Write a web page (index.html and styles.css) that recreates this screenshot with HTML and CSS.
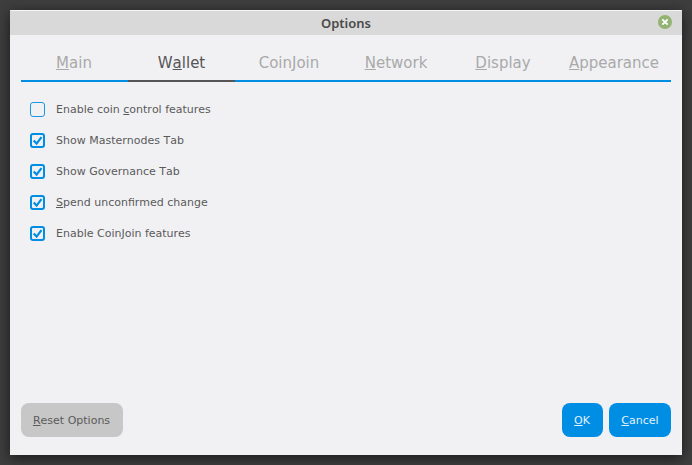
FILE: index.html
```html
<!DOCTYPE html>
<html lang="en">
<head>
<meta charset="utf-8">
<title>Options</title>
<link rel="stylesheet" href="styles.css">
</head>
<body>
<main class="dialog">
  <header class="titlebar">
    <h1 class="title">Options</h1>
    <button class="close" aria-label="Close">
      <svg width="14" height="14" viewBox="0 0 14 14"><circle cx="7" cy="7" r="7" fill="#92b372"/><path d="M4.3 4.3l5.4 5.4M9.7 4.3l-5.4 5.4" stroke="#fff" stroke-width="1.9"/></svg>
    </button>
  </header>
  <nav class="tabs">
    <a class="tab"><span class="label"><u>M</u>ain</span></a>
    <a class="tab active"><span class="label">W<u>a</u>llet</span></a>
    <a class="tab"><span class="label">CoinJoin</span></a>
    <a class="tab"><span class="label"><u>N</u>etwork</span></a>
    <a class="tab"><span class="label"><u>D</u>isplay</span></a>
    <a class="tab"><span class="label"><u>A</u>ppearance</span></a>
  </nav>
  <section class="options">
    <label class="option"><span class="box"></span><span>Enable coin <u>c</u>ontrol features</span></label>
    <label class="option"><span class="box checked"><svg width="15" height="15" viewBox="0 0 15 15"><path d="M3.7 7.6l2.9 3 4.9-6.4" /></svg></span><span>Show Masternodes Tab</span></label>
    <label class="option"><span class="box checked"><svg width="15" height="15" viewBox="0 0 15 15"><path d="M3.7 7.6l2.9 3 4.9-6.4" /></svg></span><span>Show Governance Tab</span></label>
    <label class="option"><span class="box checked"><svg width="15" height="15" viewBox="0 0 15 15"><path d="M3.7 7.6l2.9 3 4.9-6.4" /></svg></span><span><u>S</u>pend unconfirmed change</span></label>
    <label class="option"><span class="box checked"><svg width="15" height="15" viewBox="0 0 15 15"><path d="M3.7 7.6l2.9 3 4.9-6.4" /></svg></span><span>Enable CoinJoin features</span></label>
  </section>
  <footer class="actions">
    <button class="btn reset"><span><u>R</u>eset Options</span></button>
    <button class="btn ok"><span><u>O</u>K</span></button>
    <button class="btn cancel"><span><u>C</u>ancel</span></button>
  </footer>
</main>
</body>
</html>
```
FILE: styles.css
```css
* { box-sizing: border-box; }
body {
  margin: 0;
  height: 465px;
  padding: 10px;
  overflow: hidden;
  background: #3e3e3e;
  font: 11px/15px "DejaVu Sans", sans-serif;
  font-kerning: none;
  color: #5a5a5a;
}
u {
  text-decoration: underline 1px;
  text-underline-offset: 1px;
  text-decoration-skip-ink: none;
}
.dialog {
  display: flex;
  flex-direction: column;
  width: 672px;
  height: 445px;
  background: #f1f1f4;
  border-radius: 1px 1px 0 0;
  box-shadow: 0 3px 14px rgba(0, 0, 0, .6);
}
.titlebar {
  display: grid;
  grid-template-columns: 24px 1fr 24px;
  align-items: center;
  height: 25px;
  border-top: 1px solid #f6f6f6;
  border-radius: 1px 1px 0 0;
  background: #d9d9d9;
}
.title {
  grid-column: 2;
  margin: 0;
  text-align: center;
  font: 600 13px/24px "Noto Sans", sans-serif;
  color: #4a4a4a;
}
.close {
  display: flex;
  width: 14px;
  height: 14px;
  margin-bottom: 2px;
  padding: 0;
  border: 0;
  background: none;
}
.tabs {
  display: grid;
  grid-template-columns: repeat(5, 107px) 115px;
  height: 47px;
  margin: 0 11px;
}
.tab {
  padding: 18px 0 0 1px;
  border-bottom: 2px solid #008de4;
  text-align: center;
  font-size: 15px;
  line-height: 20px;
  color: #a9a9a9;
}
.tab:first-child { padding: 18px 1px 0 0; }
.tab.active {
  padding-left: 0;
  border-color: #555;
  color: #555;
}
.tab u { text-underline-offset: 1px; }
.options {
  display: flex;
  flex-direction: column;
  gap: 16px;
  padding: 20px 20px 0;
}
.option {
  display: flex;
  gap: 11px;
  height: 15px;
}
.box {
  display: flex;
  width: 15px;
  height: 15px;
  border: 1px solid #1a97e6;
  border-radius: 3px;
}
.box.checked { border: 2px solid #008de4; }
.box svg { flex: none; margin: -2px; }
.box path {
  fill: none;
  stroke: #008de4;
  stroke-width: 2.2;
}
.actions {
  display: flex;
  gap: 6px;
  margin: auto 11px 18px;
}
.btn {
  height: 34px;
  padding: 0;
  border: 0;
  border-radius: 8px;
  background: #008de4;
  color: #e3f2fc;
  font: inherit;
  font-kerning: none;
}
.reset {
  width: 102px;
  padding-right: 1px;
  margin-right: auto;
  background: #c7c7c7;
  color: #5a5a5a;
}
.ok { width: 41px; padding-right: 1px; }
.cancel { width: 62px; }
```
